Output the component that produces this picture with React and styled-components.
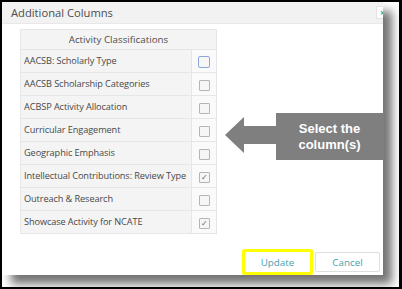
import styled, { createGlobalStyle } from "styled-components";

const Global = createGlobalStyle`
  html, body { margin: 0; padding: 0; background: #000; }
  body { font-family: "Open Sans", "Liberation Sans", sans-serif; }
`

const Frame = styled.div`
  width: 402px;
  height: 289px;
  box-sizing: border-box;
  background: #000;
  padding: 2px 3px 2px 2px;
`

const Page = styled.div`
  position: relative;
  width: 100%;
  height: 100%;
  background: #fff;
  overflow: hidden;
`

const Dialog = styled.div`
  position: relative;
  width: 381px;
  height: 273px;
  display: flex;
  flex-direction: column;
  background: #fff;
  box-shadow: 9px 9px 9px rgba(0, 0, 0, 0.55);
`

const Header = styled.div`
  height: 26px;
  display: flex;
  align-items: center;
  justify-content: space-between;
  padding-left: 9px;
  background: #f2f2f2;
  border-bottom: 1px solid #e8e8e8;
  box-sizing: border-box;
  overflow: hidden;
  font-size: 11.2px;
  color: #4d4d4d;
`

const Close = styled.span`
  width: 11px;
  height: 11px;
  margin-right: -6px;
  display: flex;
  align-items: center;
  justify-content: center;
  background: #fff;
  border: 1px solid #e3e3e3;
  color: #2aa0a8;
  font-size: 9px;
  font-weight: bold;
  line-height: 1;
`

const Table = styled.div`
  width: 195px;
  margin: 5px 0 0 18px;
  border: 1px solid #e6e6e6;
  border-top: none;
  background: #f4f4f4;
`

const HeadRow = styled.div`
  height: 19px;
  display: flex;
  align-items: center;
  justify-content: center;
  border-top: 1px solid #e6e6e6;
  font-size: 9.8px;
  color: #4d4d4d;
`

const Row = styled.div`
  height: 22px;
  display: flex;
  border-top: 1px solid #e6e6e6;
`

const Label = styled.div`
  flex: 1;
  display: flex;
  align-items: center;
  padding: 0 0 2px 3px;
  font-size: 9.2px;
  color: #484848;
  white-space: nowrap;
  letter-spacing: -0.1px;
`

const BoxCell = styled.div`
  width: 25px;
  display: flex;
  align-items: center;
  justify-content: center;
  border-left: 1px solid #e6e6e6;
  background: #fafafa;
  padding-top: 2px;
  box-sizing: border-box;
`

const Check = styled.span`
  width: ${p => (p.$focus ? "10px" : "9px")};
  height: ${p => (p.$focus ? "10px" : "9px")};
  display: flex;
  align-items: center;
  justify-content: center;
  border: 1px solid ${p => (p.$focus ? "#8aa8dc" : "#b5b5b5")};
  border-radius: ${p => (p.$focus ? "2px" : "1px")};
  background: #f6f6f6;
  color: #666;
  font-size: 8px;
  line-height: 1;
`

const Footer = styled.div`
  display: flex;
  justify-content: flex-end;
  align-items: center;
  gap: 2px;
  margin-top: 15px;
  padding-right: 3px;
`

const Button = styled.button`
  width: ${p => (p.$highlight ? "71px" : "65px")};
  height: ${p => (p.$highlight ? "26px" : "20px")};
  box-sizing: border-box;
  border: ${p => (p.$highlight ? "3px solid #ffff00" : "1px solid #dedede")};
  border-radius: 2px;
  background: #fff;
  color: #45a2b2;
  font-family: "Open Sans", "Liberation Sans", sans-serif;
  font-size: 9.8px;
  padding: 0;
`

const Callout = styled.div`
  position: absolute;
  left: 223px;
  top: 111px;
  width: 159px;
  height: 47px;
`

const CalloutText = styled.div`
  position: absolute;
  left: 50px;
  top: 0;
  right: 0;
  bottom: 0;
  display: flex;
  align-items: center;
  justify-content: center;
  text-align: center;
  color: #fff;
  font-family: "Liberation Sans", Arial, sans-serif;
  font-weight: bold;
  font-size: 13px;
  line-height: 16px;
`

const rows = [
  ["AACSB: Scholarly Type", false, true],
  ["AACSB Scholarship Categories", false],
  ["ACBSP Activity Allocation", false],
  ["Curricular Engagement", false],
  ["Geographic Emphasis", false],
  ["Intellectual Contributions: Review Type", true],
  ["Outreach & Research", false],
  ["Showcase Activity for NCATE", true],
]

function App() {
  return (
    <Frame>
      <Global />
      <Page>
        <Dialog>
          <Header>
            <span>Additional Columns</span>
            <Close>×</Close>
          </Header>
          <Table>
            <HeadRow>Activity Classifications</HeadRow>
            {rows.map(([name, checked, focus]) => (
              <Row key={name}>
                <Label>{name}</Label>
                <BoxCell>
                  <Check $focus={focus}>{checked ? "✓" : ""}</Check>
                </BoxCell>
              </Row>
            ))}
          </Table>
          <Footer>
            <Button $highlight>Update</Button>
            <Button>Cancel</Button>
          </Footer>
        </Dialog>
        <Callout>
          <svg width="159" height="47" viewBox="0 0 159 47">
            <polygon
              points="0,22 19,4 19,13 51,13 51,0 159,0 159,47 51,47 51,31 19,31 19,40"
              fill="#7f7f7f"
            />
          </svg>
          <CalloutText>Select the<br />column(s)</CalloutText>
        </Callout>
      </Page>
    </Frame>
  )
}

export default App;
